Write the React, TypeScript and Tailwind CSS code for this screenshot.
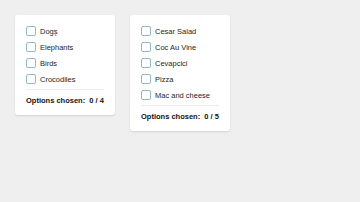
import React from "react";

const Card = ({ items, showCursor }: { items: string[]; showCursor?: boolean }) => (
  <div className="w-[100px] bg-white rounded-[3px] shadow-[0_1px_2px_rgba(0,0,0,0.12)] px-[11px] pt-[8px] pb-[8px]">
    <div className="flex flex-col">
      {items.map((it, i) => (
        <div key={it} className="h-[16px] flex items-center gap-[4px] relative">
          <span className="w-[10px] h-[10px] border border-[#93b9c3] rounded-[2px] bg-white shrink-0" />
          <span className="text-[7.5px] leading-[9px] text-[#1e1e1e]">{it}</span>
          {showCursor && i === 0 && (
            <svg className="absolute left-[28px] top-[8px]" width="3" height="5" viewBox="0 0 3 5">
              <path d="M0.5 0.5 H2.5 M1.5 0.5 V4.5 M0.5 4.5 H2.5" stroke="#9a9a9a" strokeWidth="0.7" fill="none" />
            </svg>
          )}
        </div>
      ))}
    </div>
    <div className="mt-[2px] h-px bg-[#ececec]" />
    <div className="pt-[6px] pb-[2px] text-[7.5px] leading-[9px] font-bold text-[#111] whitespace-pre">
      {`Options chosen:  0 / ${items.length}`}
    </div>
  </div>
);

export default function App() {
  return (
    <div
      className="w-[360px] h-[202px] bg-[#efefef] flex items-start gap-[15px] p-[15px]"
      style={{ fontFamily: '"Liberation Sans", Arial, sans-serif' }}
    >
      <Card items={["Dogs", "Elephants", "Birds", "Crocodiles"]} showCursor />
      <Card items={["Cesar Salad", "Coc Au Vine", "Cevapcici", "Pizza", "Mac and cheese"]} />
    </div>
  );
}
